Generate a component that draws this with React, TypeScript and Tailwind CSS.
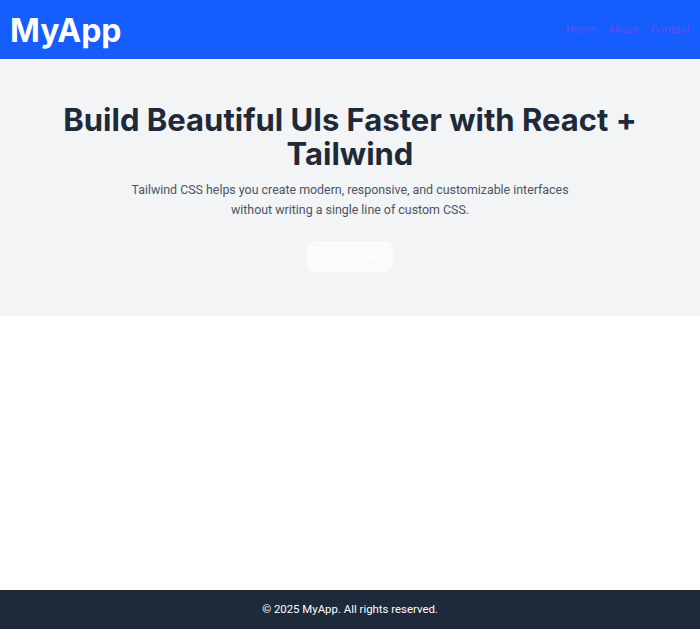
export default function App() {
  return (
    <div className="min-h-screen flex flex-col bg-white font-['Roboto',sans-serif]">
      <header className="bg-[#155dfc] h-[59px] flex items-center justify-between pl-[10px] pr-[10px]">
        <h1 className="text-[32px] font-bold text-white leading-none font-['Inter',sans-serif] pt-[2px]">MyApp</h1>
        <nav className="flex gap-[12px] text-[11.3px] text-[#5b4ef3] font-medium pt-[2px]">
          <a>Home</a>
          <a>About</a>
          <a>Contact</a>
        </nav>
      </header>
      <section className="bg-[#f3f4f6] h-[257px] flex flex-col items-center pt-[44px] px-10 text-center">
        <h2 className="text-[31px] font-bold text-[#1e2939] leading-[34px] max-w-[600px] font-['Inter',sans-serif]">
          Build Beautiful UIs Faster with React + Tailwind
        </h2>
        <p className="mt-[9px] text-[12.4px] leading-[20px] text-[#4a5565] max-w-[450px]">
          Tailwind CSS helps you create modern, responsive, and customizable interfaces without writing a single line of custom CSS.
        </p>
        <button className="mt-[21px] h-[31px] w-[86px] rounded-lg bg-white/60 text-white text-[12px] font-medium">
          Get Started
        </button>
      </section>
      <main className="flex-1" />
      <footer className="bg-[#1e2939] h-[39px] flex items-center justify-center text-[11.4px] text-white">
        © 2025 MyApp. All rights reserved.
      </footer>
    </div>
  );
}
